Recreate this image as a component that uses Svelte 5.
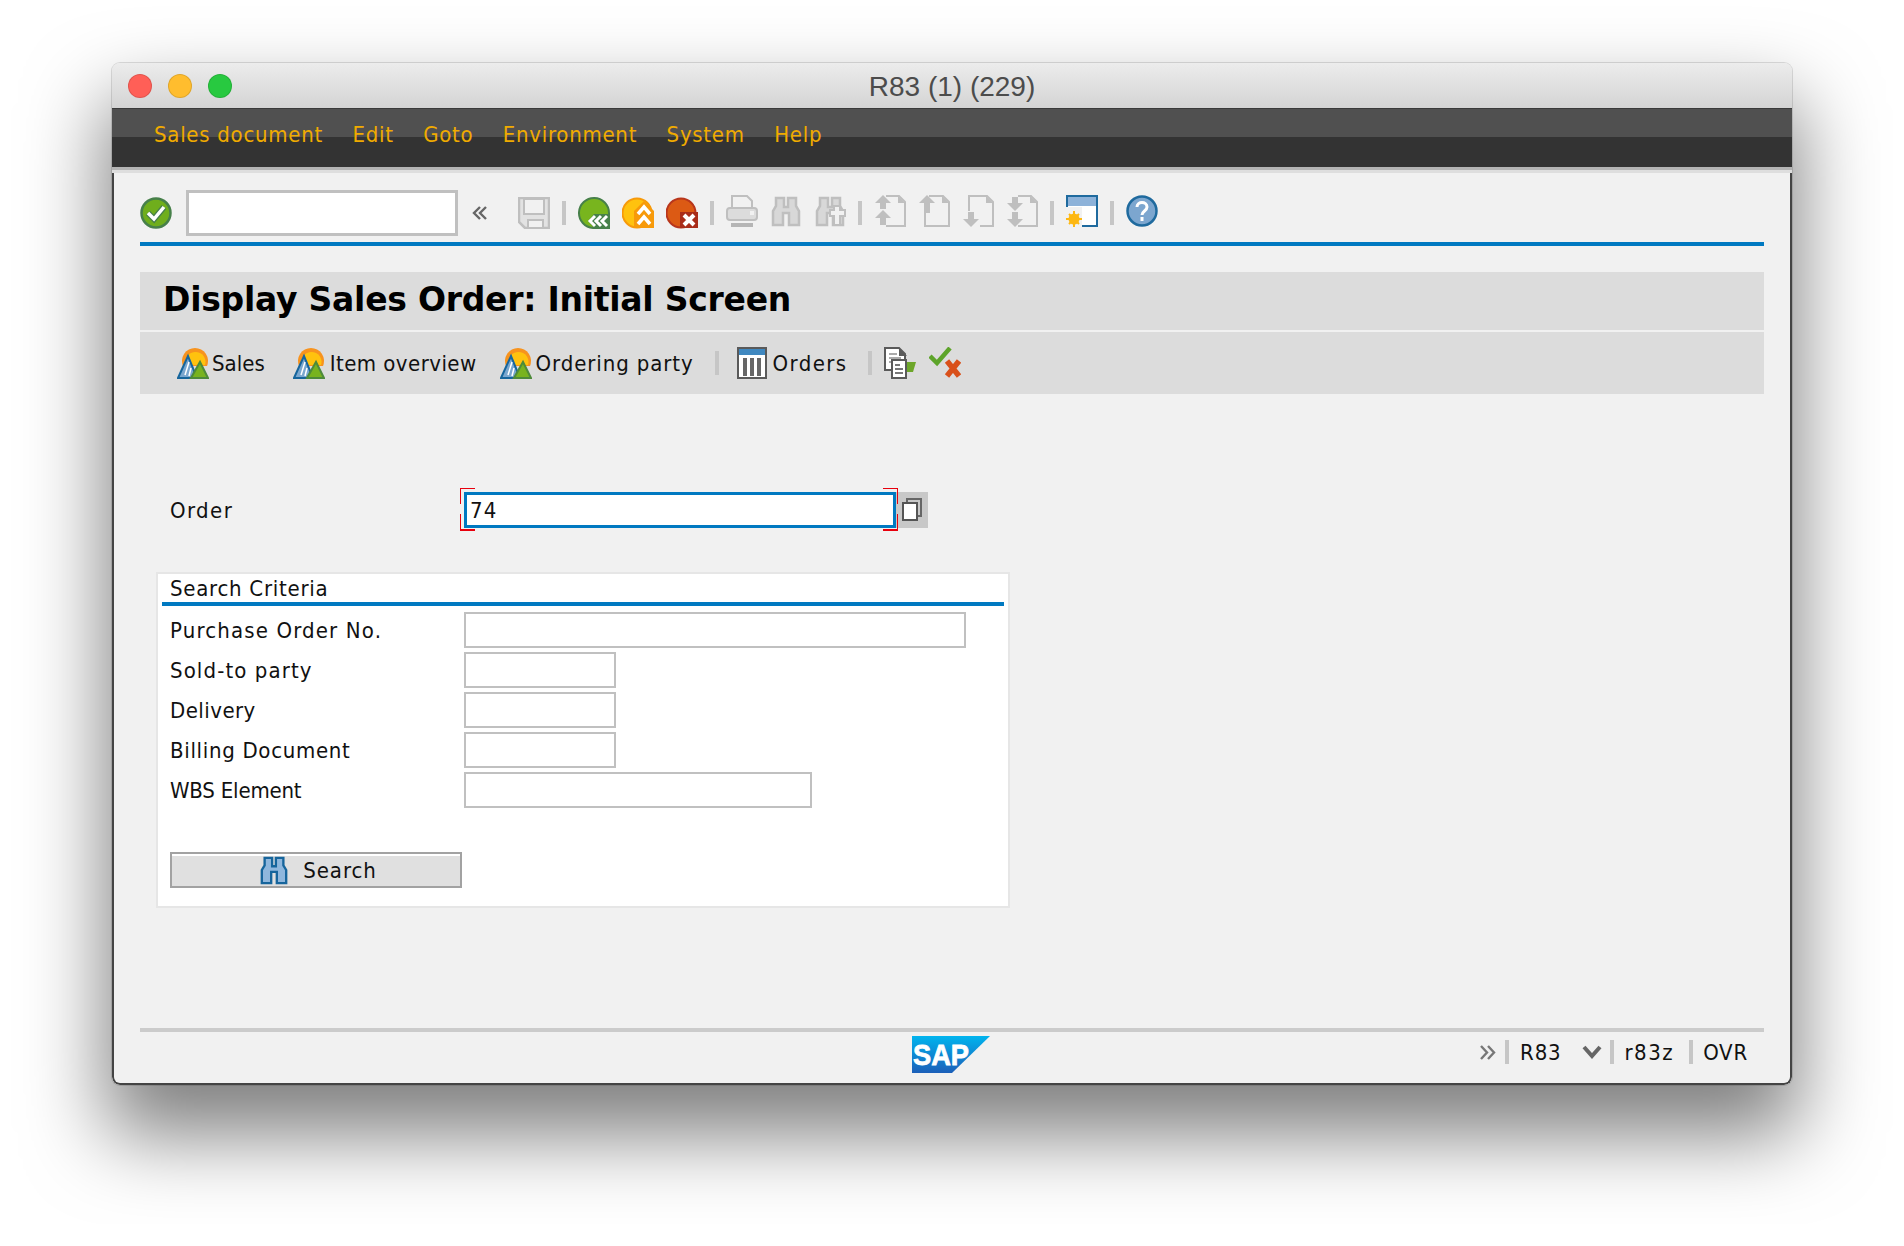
<script>
  const menus = ["Sales document", "Edit", "Goto", "Environment", "System", "Help"]
  // letter spacing per label: the original font runs a bit wider than ours
  const fields = [
    { label: "Purchase Order No.", width: 502, spacing: 1.15 },
    { label: "Sold-to party", width: 152, spacing: 1.1 },
    { label: "Delivery", width: 152, spacing: 0.45 },
    { label: "Billing Document", width: 152, spacing: 0.68 },
    { label: "WBS Element", width: 348, spacing: -0.2 }
  ]
</script>

{#snippet sun()}
  <svg class="ico" width="32" height="32" viewBox="0 0 32 32">
    <path d="M6 19a13 13 0 1 1 24 0z" fill="#f7931e"/>
    <path d="M9 18a10 10 0 1 1 19 0z" fill="#ffc20e"/>
    <path d="M1 31L11 9l9 22z" fill="#7aa7cf" stroke="#16659c" stroke-width="2"/>
    <path d="M8 28l4-13M12 29l2-8" stroke="#fff" stroke-width="1.5"/>
    <path d="M14 31l9-16 8 16z" fill="#78b31f" stroke="#4d8a3a" stroke-width="2"/>
  </svg>
{/snippet}

{#snippet bino(stroke, fill)}
  <path d="M3 30V16l3-5V3h8v9h4V3h8v8l3 5v14H19V18h-6v12z" fill={fill} stroke={stroke} stroke-width="2.5"/>
{/snippet}

{#snippet page(outline, arrows)}
  <svg class="ico up2" width="32" height="32" viewBox="0 0 32 32">
    <path d={outline} fill="none" stroke="#bfbfbf" stroke-width="2"/>
    <path d="M24 1l7 7h-7z" fill="#bfbfbf"/>
    <path d={arrows} fill="#bfbfbf"/>
  </svg>
{/snippet}

<div class="window">
  <div class="titlebar">
    <div class="lights">
      <span class="light red"></span>
      <span class="light yellow"></span>
      <span class="light green"></span>
    </div>
    <div class="wintitle">R83 (1) (229)</div>
  </div>

  <div class="menubar">
    {#each menus as m}
      <span>{m}</span>
    {/each}
  </div>
  <div class="menushade"></div>

  <div class="content">
    <div class="toolbar">
      <svg class="ico" width="32" height="32" viewBox="0 0 32 32">
        <circle cx="16" cy="16" r="14.5" fill="#6fae1c" stroke="#47804a" stroke-width="2.5"/>
        <path d="M8 16l6 6 10-12" fill="none" stroke="#47804a" stroke-width="6"/>
        <path d="M8 16l6 6 10-12" fill="none" stroke="#fff" stroke-width="3.5"/>
      </svg>
      <input class="cmd" type="text" />
      <svg class="collapse" width="16" height="14" viewBox="0 0 16 14">
        <path d="M8 1L2 7l6 6M14 1L8 7l6 6" fill="none" stroke="#666" stroke-width="2.4"/>
      </svg>
      <svg class="ico save" width="32" height="32" viewBox="0 0 32 32">
        <path d="M1 1h30v30H7l-6-6z" fill="#e2e2e2" stroke="#bfbfbf" stroke-width="2.5"/>
        <rect x="6" y="2" width="20" height="15" fill="#f1f1f1" stroke="#bfbfbf" stroke-width="2"/>
        <rect x="10" y="23" width="15" height="8" fill="#f1f1f1" stroke="#bfbfbf" stroke-width="2"/>
      </svg>
      <span class="sep"></span>
      <svg class="ico" width="32" height="32" viewBox="0 0 32 32">
        <path d="M31 16a15 15 0 1 0-16 15h16z" fill="#78b51e" stroke="#47804a" stroke-width="2"/>
        <path d="M10 24l6-7h14v14H16z" fill="#47804a"/>
        <path d="M17 19l-5 5 5 5M23 19l-5 5 5 5M29 19l-5 5 5 5" fill="none" stroke="#fff" stroke-width="3"/>
      </svg>
      <svg class="ico" width="32" height="32" viewBox="0 0 32 32">
        <circle cx="15" cy="16" r="14.5" fill="#ffc20e" stroke="#f79a0a" stroke-width="2"/>
        <path d="M22 4l10 10v17H12V14z" fill="#f79a0a"/>
        <path d="M16 17l6-7 6 7M16 27l6-7 6 7" fill="none" stroke="#fff" stroke-width="3.5"/>
      </svg>
      <svg class="ico" width="32" height="32" viewBox="0 0 32 32">
        <circle cx="15" cy="16" r="14.5" fill="#dc5a14" stroke="#b8361c" stroke-width="2"/>
        <rect x="14" y="15" width="18" height="16" fill="#a92d1a"/>
        <path d="M18 18l10 10M28 18L18 28" stroke="#fff" stroke-width="4"/>
      </svg>
      <span class="sep"></span>
      <svg class="ico up2" width="32" height="32" viewBox="0 0 32 32">
        <path d="M6 13V1h15l5 5v7" fill="none" stroke="#bfbfbf" stroke-width="2"/>
        <rect x="1" y="13" width="30" height="12" rx="3" fill="#dcdcdc" stroke="#bfbfbf" stroke-width="2"/>
        <rect x="24" y="16" width="4" height="4" fill="#f1f1f1"/>
        <rect x="5" y="28" width="22" height="4" fill="#b5b5b5"/>
      </svg>
      <svg class="ico up2" width="32" height="32" viewBox="0 0 32 32">{@render bino("#bfbfbf", "#d8d8d8")}</svg>
      <svg class="ico up2" width="32" height="32" viewBox="0 0 32 32">
        {@render bino("#bfbfbf", "#d8d8d8")}
        <path d="M20 11h6v4h5v6h-5v9h-6v-9h-4v-6h4z" fill="#f1f1f1" stroke="#bfbfbf" stroke-width="2"/>
      </svg>
      <span class="sep"></span>
      {@render page("M12 1h13l6 6v24H12", "M9 0l8 8h-5v6H6V8H1zM9 15l8 8h-5v7H6v-7H1z")}
      {@render page("M11 1h14l6 6v24H7V18", "M9 0l8 8h-5v10H6V8H1z")}
      {@render page("M7 16V1h18l6 6v24H18", "M6 17h6v7h5l-8 8-8-8h5z")}
      {@render page("M12 1h13l6 6v24H12", "M6 2h6v6h5l-8 8-8-8h5zM6 17h6v7h5l-8 8-8-8h5z")}
      <span class="sep"></span>
      <svg class="ico up2" width="32" height="32" viewBox="0 0 32 32">
        <rect x="1" y="1" width="30" height="30" fill="#fff" stroke="#1f6a9e" stroke-width="2"/>
        <rect x="2" y="2" width="28" height="9" fill="#8db2d9"/>
        <rect x="0" y="12" width="16" height="20" fill="#f1f1f1"/>
        <rect x="0" y="0" width="32" height="2" fill="#1f6a9e"/>
        <circle cx="8" cy="24" r="5.5" fill="#fdb813"/>
        <path d="M8 16v16M0 24h16M3 19l10 10M13 19L3 29" stroke="#fdb813" stroke-width="2"/>
      </svg>
      <span class="sep"></span>
      <svg class="ico up2" width="32" height="32" viewBox="0 0 32 32">
        <circle cx="16" cy="16" r="14.5" fill="#7ca6cf" stroke="#1f6a9e" stroke-width="2.5"/>
        <path d="M11 12c0-6 10-6 10 0 0 4-5 4-5 8" fill="none" stroke="#fff" stroke-width="3"/>
        <rect x="14.5" y="22" width="3" height="4" fill="#fff"/>
      </svg>
    </div>

    <div class="pagetitle">Display Sales Order: Initial Screen</div>
    <div class="actions">
      <span class="act sales">{@render sun()}<span>Sales</span></span>
      <span class="act item">{@render sun()}<span>Item overview</span></span>
      <span class="act party">{@render sun()}<span>Ordering party</span></span>
      <span class="sep first"></span>
      <span class="act orders">
        <svg class="ico" width="32" height="32" viewBox="0 0 32 32">
          <rect x="1" y="1" width="28" height="30" fill="#fff" stroke="#5a5a5a" stroke-width="2"/>
          <rect x="2" y="2" width="26" height="6" fill="#3f88c0"/>
          <path d="M8 11v18M15 11v18M22 11v18" stroke="#666" stroke-width="4"/>
        </svg>
        <span>Orders</span>
      </span>
      <span class="sep second"></span>
      <svg class="ico" width="32" height="32" viewBox="0 0 32 32">
        <path d="M1 1h14l6 6v16H1z" fill="#fff" stroke="#5a5a5a" stroke-width="2"/>
        <path d="M15 1l8 8h-8z" fill="#5a5a5a"/>
        <path d="M5 7h8M5 11h12M5 15h12" stroke="#aaa" stroke-width="2"/>
        <path d="M22 15h10l-3 10h-7z" fill="#6da62a"/>
        <rect x="8" y="13" width="14" height="18" fill="#fff" stroke="#5a5a5a" stroke-width="2"/>
        <path d="M11 18h5M11 22h8M11 26h8" stroke="#777" stroke-width="2"/>
      </svg>
      <svg class="ico check" width="32" height="32" viewBox="0 0 32 32">
        <path d="M1 9l7 7L21 1" fill="none" stroke="#5da42a" stroke-width="4.5"/>
        <path d="M18 14l12 15M30 14L18 29" stroke="#d9501a" stroke-width="5.500"/>
      </svg>
    </div>

    <div class="orderrow">
      <label for="order">Order</label>
      <div class="required">
        <input id="order" class="order" type="text" value="74" />
        <span class="mark tl"></span>
        <span class="mark tr"></span>
        <span class="mark bl"></span>
        <span class="mark br"></span>
      </div>
      <button class="f4" aria-label="Value help">
        <svg width="22" height="24" viewBox="0 0 22 24">
          <path d="M6 4V1h14v17h-4" fill="none" stroke="#666" stroke-width="2"/>
          <rect x="2" y="5" width="14" height="17" fill="#fff" stroke="#555" stroke-width="2"/>
        </svg>
      </button>
    </div>

    <fieldset class="group">
      <div class="legend">Search Criteria</div>
      {#each fields as f}
        <div class="row">
          <span class="lbl" style="letter-spacing: {f.spacing}px">{f.label}</span>
          <input type="text" style="width: {f.width}px" />
        </div>
      {/each}
      <button class="search">
        <svg width="30" height="30" viewBox="0 0 32 32">{@render bino("#16659c", "#8fb7dd")}</svg>
        <span>Search</span>
      </button>
    </fieldset>

    <div class="status">
      <svg class="logo" width="78" height="37" viewBox="0 0 78 37">
        <defs>
          <linearGradient id="sapg" x1="0" y1="0" x2="0" y2="1">
            <stop offset="0" stop-color="#00b4ee"/>
            <stop offset="1" stop-color="#1c5fb9"/>
          </linearGradient>
        </defs>
        <path d="M0 0h78L40 37H0z" fill="url(#sapg)"/>
        <text x="1" y="29" class="saptext" textLength="56" lengthAdjust="spacingAndGlyphs">SAP</text>
      </svg>
      <div class="sysinfo">
        <svg class="more" width="17" height="15" viewBox="0 0 17 15">
          <path d="M2 1l6 6.500-6 6.500M9 1l6 6.500-6 6.500" fill="none" stroke="#777" stroke-width="2.400"/>
        </svg>
        <span class="sep"></span>
        <span class="sys">R83</span>
        <svg class="drop" width="20" height="14" viewBox="0 0 20 14">
          <path d="M2 2l8 9 8-9" fill="none" stroke="#666" stroke-width="4"/>
        </svg>
        <span class="sep"></span>
        <span class="client">r83z</span>
        <span class="sep"></span>
        <span class="sys ovr">OVR</span>
      </div>
    </div>
  </div>
</div>

<style>
  :global(body) {
    background: #fff;
    font-family: "DejaVu Sans", sans-serif;
  }

  .window {
    box-sizing: border-box;
    width: 1680px;
    height: 1022px;
    margin: 63px 0 139px 112px;
    display: flex;
    flex-direction: column;
    border-radius: 8px;
    box-shadow: 0 0 0 1px rgba(0, 0, 0, 0.12), 0 44px 80px 6px rgba(0, 0, 0, 0.5);
    background: #f1f1f1;
    overflow: hidden;
  }

  .titlebar {
    height: 45px;
    flex-shrink: 0;
    display: flex;
    align-items: center;
    justify-content: center;
    position: relative;
    background: linear-gradient(#ececec, #d4d4d4);
  }
  .lights {
    position: absolute;
    left: 16px;
    top: 11px;
    display: flex;
    gap: 16px;
  }
  .light {
    box-sizing: border-box;
    width: 24px;
    height: 24px;
    border-radius: 50%;
    border: 1px solid rgba(0, 0, 0, 0.12);
  }
  .red { background: #ff5f57; }
  .yellow { background: #ffbd2e; }
  .green { background: #28c940; }
  .wintitle {
    font: 28px "Liberation Sans", sans-serif;
    color: #4c4c4c;
    padding-top: 2px;
  }

  .menubar {
    height: 59px;
    flex-shrink: 0;
    box-sizing: border-box;
    padding: 0 0 8px 42px;
    display: flex;
    align-items: center;
    gap: 29.5px;
    color: #f0ab00;
    font-size: 22px;
    font-stretch: condensed;
    letter-spacing: 0.72px;
    background: linear-gradient(#505050 48%, #333 48%);
    border-top: 1px solid #3a3a3a;
  }
  .menushade {
    height: 6px;
    flex-shrink: 0;
    background: linear-gradient(#b4b4b4 50%, #dedede 50%);
  }

  .content {
    flex: 1;
    display: flex;
    flex-direction: column;
    padding: 0 26px 0 26px;
    border-left: 2px solid #444;
    border-right: 2px solid #444;
    border-bottom: 2px solid #444;
    border-radius: 0 0 8px 8px;
  }

  .toolbar {
    display: flex;
    align-items: center;
    gap: 12px;
    height: 46px;
    margin-top: 17px;
    padding-bottom: 6px;
    border-bottom: 4px solid #0079c1;
  }
  .ico { flex-shrink: 0; }
  .up2 { margin-top: -4px; }
  .sep {
    width: 4px;
    height: 24px;
    flex-shrink: 0;
    background: #c6c6c6;
  }
  input {
    box-sizing: border-box;
    height: 36px;
    background: #fff;
    border: 2px solid #c0c0c0;
    border-radius: 0;
    padding: 0 6px;
    margin: 0;
    outline: none;
    font: 22px "DejaVu Sans", sans-serif;
    font-stretch: condensed;
  }
  .cmd {
    width: 272px;
    height: 46px;
    border-width: 3px;
    margin-left: 2px;
  }
  .collapse { margin-left: 2px; }
  .save { margin-left: 18px; }

  .pagetitle {
    height: 58px;
    flex-shrink: 0;
    box-sizing: border-box;
    margin-top: 26px;
    padding: 0 0 3px 23px;
    display: flex;
    align-items: center;
    background: #dcdcdc;
    color: #000;
    font-size: 33px;
    font-weight: bold;
    letter-spacing: -0.25px;
  }
  .actions {
    height: 62px;
    flex-shrink: 0;
    margin-top: 2px;
    box-sizing: border-box;
    padding-left: 37px;
    display: flex;
    align-items: center;
    gap: 23px;
    background: #dcdcdc;
    font-size: 22px;
    font-stretch: condensed;
    color: #111;
  }
  .act {
    display: flex;
    align-items: center;
    gap: 4px;
  }
  .sales { gap: 3px; margin-right: 5px; }
  .item { gap: 5px; letter-spacing: 0.45px; }
  .party { letter-spacing: 0.9px; }
  .orders { letter-spacing: 1.4px; }
  .first { margin: 0 -5px 0 -2px; }
  .second { margin: 0 -11px 0 -3px; }
  .check { margin-left: -10px; }

  .orderrow {
    display: flex;
    align-items: center;
    height: 36px;
    flex-shrink: 0;
    margin-top: 98px;
    padding-left: 30px;
    font-size: 22px;
    font-stretch: condensed;
    color: #111;
  }
  .orderrow label { width: 294px; letter-spacing: 1.4px; }
  .required { position: relative; }
  .order {
    width: 432px;
    border: 3px solid #0079c1;
    padding: 0 3px;
    color: #111;
    letter-spacing: 1.2px;
  }
  .mark {
    position: absolute;
    width: 14px;
    height: 15px;
    border: 0 solid #e8000d;
  }
  .tl { left: -4px; top: -4px; border-width: 1px 0 0 1.5px; }
  .tr { right: -2px; top: -4px; border-width: 1px 1.5px 0 0; }
  .bl { left: -4px; bottom: -3px; border-width: 0 0 2.5px 1.5px; }
  .br { right: -2px; bottom: -3px; border-width: 0 1.5px 2.5px 0; }
  .f4 {
    width: 32px;
    height: 36px;
    padding: 0;
    border: 0;
    display: flex;
    align-items: center;
    justify-content: center;
    background: #c8c8c8;
  }

  .group {
    box-sizing: border-box;
    width: 854px;
    height: 336px;
    flex-shrink: 0;
    margin: 44px 0 0 16px;
    padding: 0 4px;
    min-width: 0;
    border: 2px solid #e6e6e6;
    background: #fff;
    font-size: 22px;
    font-stretch: condensed;
    color: #111;
  }
  .legend {
    box-sizing: border-box;
    height: 32px;
    padding-left: 8px;
    line-height: 30px;
    letter-spacing: 0.73px;
    border-bottom: 4px solid #0079c1;
    margin-bottom: 6px;
  }
  .row {
    display: flex;
    align-items: center;
    height: 36px;
    margin-bottom: 4px;
    padding-left: 8px;
  }
  .lbl { width: 294px; flex-shrink: 0; }
  .search {
    box-sizing: border-box;
    width: 292px;
    height: 36px;
    margin: 44px 0 0 8px;
    padding: 0 0 0 4px;
    display: flex;
    align-items: center;
    justify-content: center;
    gap: 14px;
    border: 2px solid #a2a2a2;
    background: #e0e0e0;
    box-shadow: inset 0 2px 0 #fff;
    font: 22px "DejaVu Sans", sans-serif;
    font-stretch: condensed;
    letter-spacing: 0.9px;
    color: #111;
  }

  .status {
    margin-top: auto;
    height: 55px;
    flex-shrink: 0;
    box-sizing: border-box;
    border-top: 4px solid #cbcbcb;
    display: flex;
    font-size: 22px;
    font-stretch: condensed;
    color: #111;
  }
  .logo { margin: 4px 0 0 772px; }
  .saptext {
    font: bold 30px "Liberation Sans", sans-serif;
    fill: #fff;
    stroke: #fff;
    stroke-width: 0.8px;
  }
  .sysinfo {
    margin-left: auto;
    padding: 7px 16px 0 0;
    height: 26px;
    display: flex;
    align-items: center;
    gap: 11px;
  }
  .more { margin-right: -2px; }
  .sys { letter-spacing: 0.8px; }
  .client { letter-spacing: 1.5px; margin: 0 4px 0 -1px; }
  .ovr { margin-left: -1px; }
  .drop { margin: 0 -3px 0 10px; }
</style>
